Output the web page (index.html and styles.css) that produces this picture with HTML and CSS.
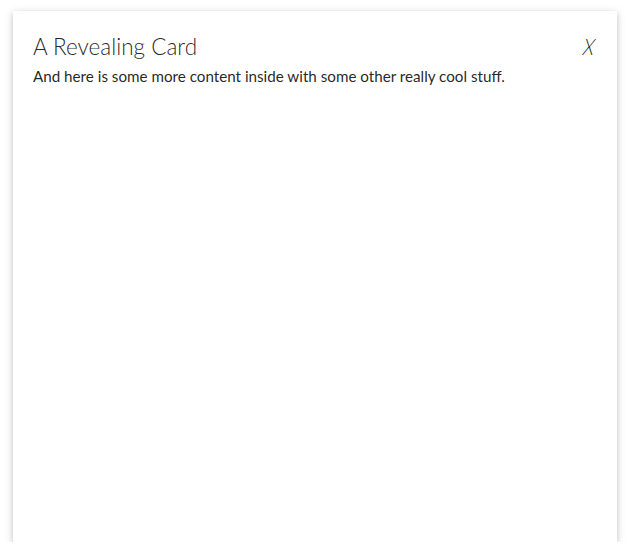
FILE: index.html
```html
<!DOCTYPE html>
<html>
<head>
<meta charset="utf-8">
<link rel="stylesheet" href="styles.css">
</head>
<body>
<div class="page">
  <div class="card">
    <div class="card-title">
      <span>A Revealing Card</span>
      <i class="close">X</i>
    </div>
    <p class="text">And here is some more content inside with some other really cool stuff.</p>
  </div>
</div>
</body>
</html>
```
FILE: styles.css
```css
html, body { margin: 0; padding: 0; background: #fff; }
.page { padding: 11px 11px 0 13px; }
.card {
  height: 531px;
  background: #fff;
  box-sizing: border-box;
  padding: 20px 20px;
  box-shadow: 0 2px 5px 0 rgba(0,0,0,.16), 0 2px 10px 0 rgba(0,0,0,.12);
  font-family: Lato, sans-serif;
  color: rgba(0,0,0,0.87);
}
.card-title {
  display: flex;
  justify-content: space-between;
  align-items: center;
  font-size: 22.5px;
  font-weight: 300;
  line-height: 32px;
  color: rgba(0,0,0,0.87);
}
.close {
  display: inline-block;
  font-style: normal;
  font-weight: 300;
  margin-right: 1px;
  transform: skewX(-14deg) scaleX(0.8);
}
.text { margin: 2px 0 0; font-size: 15.2px; line-height: 22px; }
```
